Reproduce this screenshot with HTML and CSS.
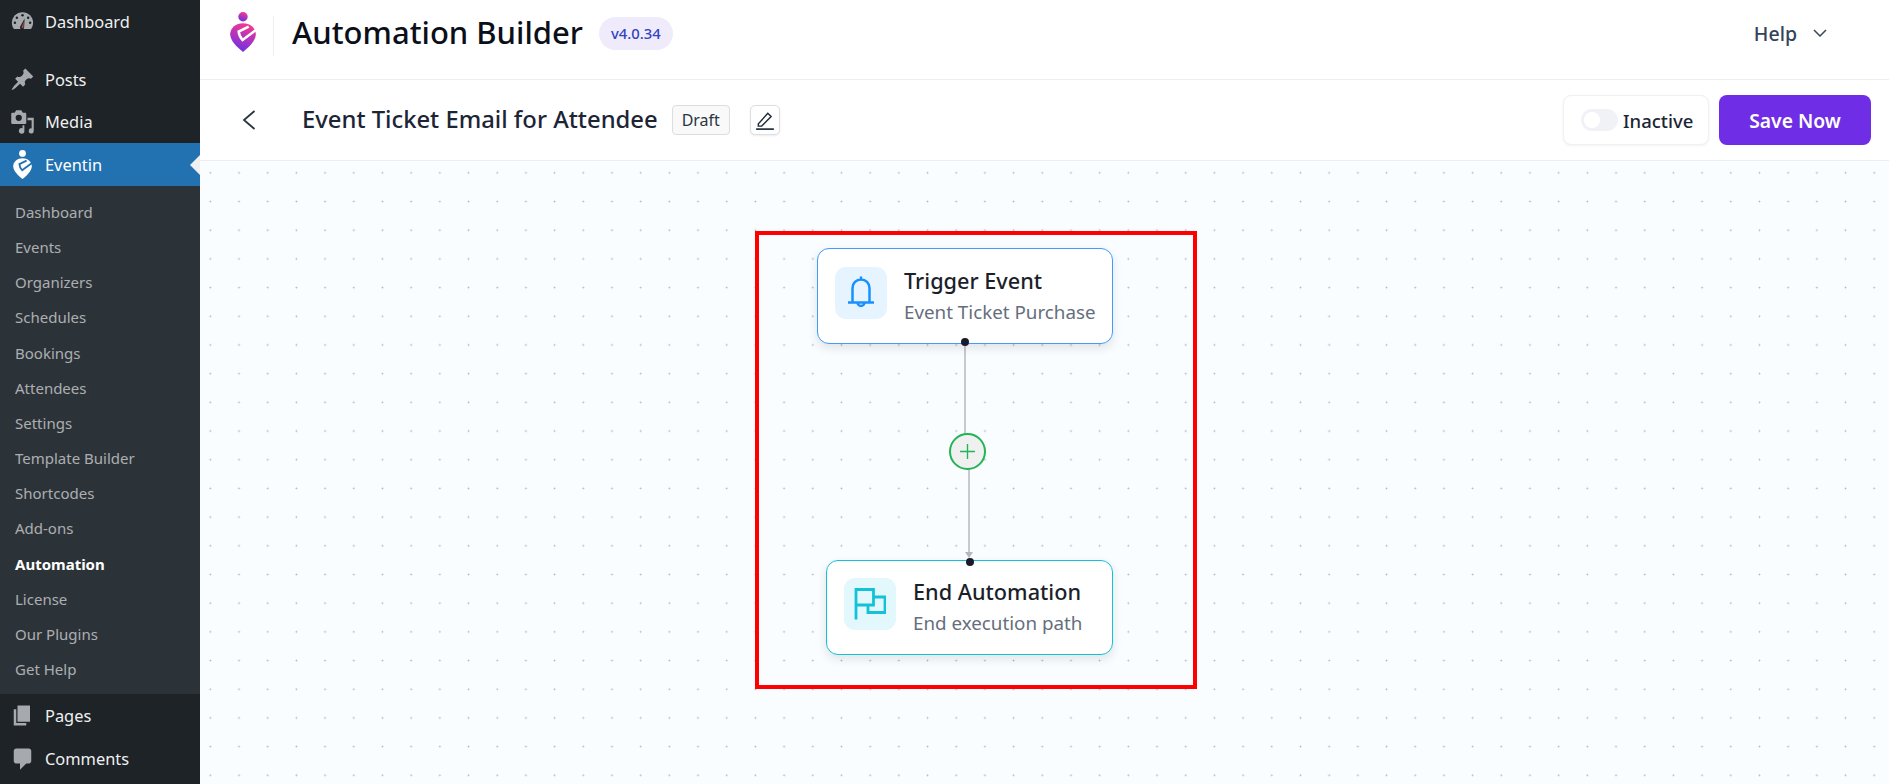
FILE: index.html
```html
<!DOCTYPE html>
<html lang="en">
<head>
<meta charset="utf-8">
<title>Automation Builder</title>
<link rel="stylesheet" href="styles.css">
</head>
<body>
<div class="app">
  <aside class="sidebar">
    <a class="menu-item first"><svg class="menu-icon" viewBox="0 0 20 20"><path d="M3.200 16h13.600A8.300 8.300 0 0 0 18.500 11a8.500 8.500 0 0 0-17 0c0 1.900.62 3.640 1.700 5z" fill="#a7aaad"/><circle cx="10" cy="5" r="1" fill="#1d2327"/><circle cx="5.500" cy="7" r="1" fill="#1d2327"/><circle cx="14.500" cy="7" r="1" fill="#1d2327"/><circle cx="3.900" cy="11" r="1" fill="#1d2327"/><circle cx="16.100" cy="11" r="1" fill="#1d2327"/><path d="M11.700 7.500l-3.200 5.900a1.700 1.700 0 1 0 2.800 1z" fill="#1d2327"/><path d="M11.300 9.500l-1.700 4.200a.8.8 0 1 0 1.200.4z" fill="#b5504c"/></svg><span>Dashboard</span></a>
    <a class="menu-item gap"><svg class="menu-icon" viewBox="0 0 20 20"><path d="M10.440 3.020l1.820-1.820 6.360 6.350-1.830 1.820c-1.050-.68-2.480-.57-3.410.36l-.75.75c-.92.93-1.040 2.350-.35 3.410l-1.830 1.820-2.410-2.410-2.800 2.790c-.42.42-3.380 2.710-3.800 2.290s1.860-3.390 2.280-3.810l2.790-2.790L4.100 9.360l1.830-1.820c1.050.69 2.480.57 3.400-.36l.75-.75c.93-.92 1.050-2.350.36-3.410z" fill="#a7aaad"/></svg><span>Posts</span></a>
    <a class="menu-item"><svg class="menu-icon" viewBox="0 0 20 20"><path fill-rule="evenodd" fill="#a7aaad" d="M13 11V4c0-.55-.45-1-1-1h-1.670L9 1H5L3.670 3H2c-.55 0-1 .45-1 1v7c0 .55.45 1 1 1h10c.55 0 1-.45 1-1zM7 4.500a2.500 2.500 0 1 1 0 5 2.500 2.500 0 0 1 0-5z"/><path fill="#a7aaad" d="M14 7h5v10.500a2 2 0 1 1-1.700-1.970V9H14zM10 13h1.500v4.500a2.200 2.200 0 1 1-1.500-2.060z"/></svg><span>Media</span></a>
    <a class="menu-item current"><svg class="menu-icon eventin-icon" viewBox="0 0 26 40"><circle cx="13" cy="4.700" r="4.700" fill="#fff"/><path fill="#fff" d="M13 11.300c6.900 0 12.800 4.500 12.800 11C25.800 28.900 19 35 13 40 7 35 .2 28.900.2 22.300.2 15.800 6.100 11.300 13 11.300z"/><path d="M18.700 14.700 8.700 19.500Q9 24 12.500 28L26 18" fill="none" stroke="#2271b1" stroke-width="2.400"/></svg><span>Eventin</span></a>
    <ul class="submenu">
      <li>Dashboard</li>
      <li>Events</li>
      <li>Organizers</li>
      <li>Schedules</li>
      <li>Bookings</li>
      <li>Attendees</li>
      <li>Settings</li>
      <li>Template Builder</li>
      <li>Shortcodes</li>
      <li>Add-ons</li>
      <li class="active">Automation</li>
      <li>License</li>
      <li>Our Plugins</li>
      <li>Get Help</li>
    </ul>
    <a class="menu-item"><svg class="menu-icon" viewBox="0 0 20 20"><path d="M6 15V2h10v13H6zm-1 1h8v2H3V5h2v11z" fill="#a7aaad"/></svg><span>Pages</span></a>
    <a class="menu-item"><svg class="menu-icon" viewBox="0 0 20 20"><path d="M5 2h10c1.100 0 2 .9 2 2v8c0 1.100-.9 2-2 2h-2l-5 5v-5H5c-1.100 0-2-.9-2-2V4c0-1.100.9-2 2-2z" fill="#a7aaad"/></svg><span>Comments</span></a>
  </aside>
  <main class="main">
    <header class="topbar">
      <svg class="logo" viewBox="0 0 26 40">
        <defs><linearGradient id="lg" x1="0.700" y1="0" x2="0.400" y2="1"><stop offset="0" stop-color="#f83a90"/><stop offset="1" stop-color="#6d2fe6"/></linearGradient></defs>
        <circle cx="13" cy="4.700" r="4.700" fill="url(#lg)"/>
        <path fill="url(#lg)" d="M13 11.300c6.900 0 12.800 4.500 12.800 11C25.800 28.900 19 35 13 40 7 35 .2 28.900.2 22.300.2 15.800 6.100 11.300 13 11.300z"/>
        <path d="M18.700 14.700 8.700 19.500Q9 24 12.500 28L26 18" fill="none" stroke="#fff" stroke-width="2.600"/>
      </svg>
      <span class="divider"></span>
      <h1 class="app-title">Automation Builder</h1>
      <span class="version">v4.0.34</span>
      <span class="help">Help<svg class="chevron" viewBox="0 0 14 8"><path d="M1 1l6 6 6-6" fill="none" stroke="#3c4858" stroke-width="1.500"/></svg></span>
    </header>
    <section class="toolbar">
      <svg class="back" viewBox="0 0 14 22"><path d="M12.500 2 2 11l10.500 9" fill="none" stroke="#2b3440" stroke-width="1.800"/></svg>
      <h2 class="flow-title">Event Ticket Email for Attendee</h2>
      <span class="status">Draft</span>
      <button class="edit"><svg viewBox="0 0 18 18"><path d="M3 12.500 11.500 3l3 2.800-8.500 8.700H3z" fill="none" stroke="#1f2a37" stroke-width="1.300"/><path d="M1 17.200h16" stroke="#1f2a37" stroke-width="1.500"/></svg></button>
      <div class="actions">
        <div class="toggle-box"><span class="switch"><span class="knob"></span></span><span>Inactive</span></div>
        <button class="save">Save Now</button>
      </div>
    </section>
    <section class="canvas">
      <div class="highlight"></div>
      <svg class="edges" viewBox="0 0 1689 623">
        <path d="M765 181V275" stroke="#b5b7bd" stroke-width="1.500" fill="none"/>
        <path d="M769 305V393" stroke="#b5b7bd" stroke-width="1.500" fill="none"/>
        <path d="M765 391h8l-4 6z" fill="#b5b7bd"/>
      </svg>
      <article class="node trigger">
        <span class="node-icon"><svg class="bell" viewBox="0 0 26 34"><path d="M13 3.500a8.500 8.500 0 0 0-8.500 8.500v14.500h17V12A8.500 8.500 0 0 0 13 3.500z M13 .5v3 M0 26.500h26 M9.500 26.500a3.500 3.500 0 0 0 7 0" fill="none" stroke="#1890ff" stroke-width="2.500"/></svg></span>
        <div class="node-text"><strong>Trigger Event</strong><small>Event Ticket Purchase</small></div>
        <i class="port port-out"></i>
      </article>
      <button class="add-node"><svg viewBox="0 0 16 16"><path d="M8 1v14M1 8h14" stroke="#22b455" stroke-width="1.300"/></svg></button>
      <article class="node end">
        <i class="port port-in"></i>
        <span class="node-icon"><svg class="flag" viewBox="0 0 32 32"><path d="M2 31.500V1.500h17.500V17H2 M19.500 9H31v15.500H14V17" fill="none" stroke="#13c2d8" stroke-width="2.800"/></svg></span>
        <div class="node-text"><strong>End Automation</strong><small>End execution path</small></div>
      </article>
    </section>
  </main>
</div>
</body>
</html>
```
FILE: styles.css
```css
* { box-sizing: border-box; }
html, body { margin: 0; height: 100%; overflow: hidden; }
body { font-family: "Noto Sans", "Open Sans", sans-serif; background: #fff; color: #111; }
.app { display: flex; height: 784px; }

.sidebar { width: 200px; flex: none; background: #1d2327; display: flex; flex-direction: column; padding-top: 0; }
.menu-item { height: 42px; display: flex; align-items: center; gap: 10px; padding-left: 10px; color: #f0f0f1; font-size: 16.400px; flex: none; }
.menu-item.first { margin-bottom: 1px; }
.menu-item.gap { margin-top: 15px; }
.menu-item.current { margin-top: 1px; }
.menu-icon { width: 25px; height: 25px; flex: none; }
.eventin-icon { padding: 0 2px; height: 29px; }
.menu-item.current { height: 43px; background: #2271b1; color: #fff; position: relative; }
.menu-item.current::after { content: ""; position: absolute; right: 0; top: 12px; border: 10px solid transparent; border-right-color: #f0f0f1; border-left-width: 0; }
.submenu { list-style: none; margin: 0; padding: 9px 0 4px; background: #2c3338; height: 508px; flex: none; }
.submenu li { height: 35.170px; line-height: 35.170px; padding-left: 15px; font-size: 15px; color: #c3c4c7; opacity: .85; }
.submenu li.active { color: #fff; font-weight: 700; opacity: 1; }
.submenu + .menu-item { height: 43px; }

.main { flex: 1; min-width: 0; display: flex; flex-direction: column; }
.topbar { height: 80px; border-bottom: 1.500px solid #eceef1; display: flex; align-items: center; padding-left: 30px; flex: none; }
.logo { width: 26px; height: 40px; flex: none; margin-top: -15px; }
.divider { width: 1px; height: 40px; background: #eceef1; margin: -8px 18px 0 17px; }
.app-title { margin: -14px 0 0; font-size: 31px; font-weight: 500; color: #0b0f19; line-height: 1; }
.version { margin-left: 16px; margin-top: -13px; height: 33px; padding: 0 12px; border-radius: 17px; background: #f0ebfb; color: #3044c4; font-size: 14.800px; font-weight: 500; line-height: 33px; }
.help { margin-left: auto; margin-right: 62px; margin-top: -13px; display: flex; align-items: center; gap: 16px; color: #33435a; font-size: 19.500px; font-weight: 500; }
.chevron { width: 14px; height: 8px; }

.toolbar { height: 81px; border-bottom: 1.500px solid #eceef1; display: flex; align-items: center; padding-left: 42px; padding-right: 18px; flex: none; }
.back { width: 14px; height: 22px; flex: none; }
.flow-title { margin: 0 0 0 46px; font-size: 23.800px; font-weight: 500; color: #1c2536; line-height: 1; }
.status { margin-left: 14px; height: 30px; padding: 0 9px; border: 1px solid #dcdee2; border-radius: 4px; background: #f9f9fa; color: #2b3440; font-size: 16px; line-height: 28px; }
.edit { margin-left: 20px; width: 30px; height: 30px; padding: 4px; background: #fff; border: 1px solid #dcdee2; border-radius: 5px; box-shadow: 0 1px 2px rgba(0,0,0,.08); display: flex; }
.edit svg { width: 20px; height: 20px; }
.actions { margin-left: auto; display: flex; align-items: center; gap: 10px; }
.toggle-box { width: 146px; height: 50px; border: 1px solid #f0f0f2; border-radius: 8px; background: #fff; box-shadow: 0 1px 3px rgba(0,0,0,.05); display: flex; align-items: center; gap: 5px; padding-left: 17px; font-size: 18.500px; font-weight: 500; color: #1c2536; }
.switch { width: 37px; height: 22px; background: #f1f2f6; border-radius: 11px; padding: 3px; display: block; }
.knob { width: 16px; height: 16px; background: #fff; border-radius: 50%; display: block; }
.save { width: 152px; height: 50px; border: 0; border-radius: 8px; background: #6f2ee6; color: #fff; font: 600 19.300px "Noto Sans", sans-serif; }

.canvas { flex: 1; position: relative; overflow: hidden; background-color: #fafdff; background-image: radial-gradient(circle, #b0b4ba 0.800px, transparent 1.100px); background-size: 28.700px 28.700px; background-position: -4px -2.500px; }
.highlight { position: absolute; left: 555px; top: 70px; width: 442px; height: 458px; border: 4px solid #fe0000; }
.edges { position: absolute; left: 0; top: 0; width: 1689px; height: 623px; }
.node { position: absolute; background: #fff; border: 1.200px solid; border-radius: 12px; box-shadow: 0 4px 10px rgba(30,40,60,.12); display: flex; align-items: center; gap: 17px; padding-left: 17px; }
.trigger { left: 617px; top: 87px; width: 296px; height: 96px; border-color: #3c9dfa; }
.end { left: 626px; top: 399px; width: 287px; height: 95px; border-color: #13c2d8; }
.node-icon { width: 52px; height: 52px; border-radius: 11px; display: flex; align-items: center; justify-content: center; flex: none; margin-bottom: 7px; }
.trigger .node-icon { background: #e6f4ff; }
.end .node-icon { background: #e3f8fc; }
.bell { width: 26px; height: 34px; }
.flag { width: 32px; height: 32px; }
.node-text { display: flex; flex-direction: column; gap: 6px; margin-top: -1px; }
.node-text strong { font-size: 21.700px; font-weight: 500; color: #1b1f2a; line-height: 27px; }
.node-text small { font-size: 18.800px; color: #666e7c; line-height: 25px; }
.port { position: absolute; width: 8px; height: 8px; border-radius: 50%; background: #1a1a2e; left: 50%; }
.port-out { bottom: -3px; margin-left: -4px; }
.port-in { top: -3px; margin-left: -4px; }
.add-node { position: absolute; left: 749px; top: 272px; width: 37px; height: 37px; border-radius: 50%; border: 2.500px solid #22b455; background: #f0f0f0; padding: 7.500px; display: flex; }
.add-node svg { width: 17px; height: 17px; }
```
